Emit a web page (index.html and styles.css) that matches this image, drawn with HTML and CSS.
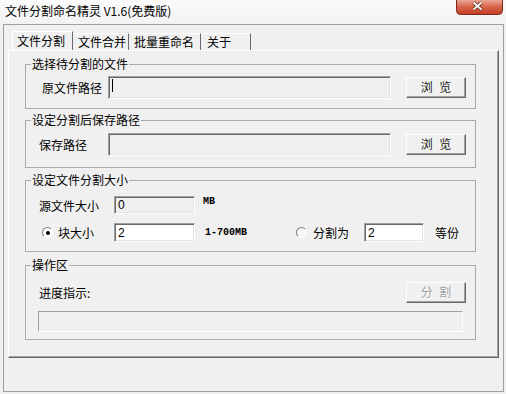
FILE: index.html
```html
<!DOCTYPE html>
<html lang="zh-CN">

<head>
    <meta charset="UTF-8">
    <title>文件分割命名精灵 V1.6(免费版)</title>
    <link rel="stylesheet" href="styles.css">
</head>

<body>

    <div class="titlebar">
        <span class="title">文件分割命名精灵 V1.6(免费版)</span>
        <div class="close">
            <svg width="47" height="15" viewBox="0 0 47 15">
                <defs>
                    <linearGradient id="closeGrad" x1="0" y1="0" x2="0" y2="1">
                        <stop offset="0" stop-color="#e9a897"/>
                        <stop offset="0.45" stop-color="#d8664c"/>
                        <stop offset="1" stop-color="#c23c22"/>
                    </linearGradient>
                </defs>
                <path d="M0.5 0 V10.5 A4 4 0 0 0 4.5 14.5 H42.5 A4 4 0 0 0 46.5 10.5 V0" fill="url(#closeGrad)" stroke="#7b2a1c"/>
                <path d="M17.5 2.5 L25.5 9.5 M25.5 2.5 L17.5 9.5" stroke="#5e2418" stroke-width="3.4"/>
                <path d="M17.5 2.5 L25.5 9.5 M25.5 2.5 L17.5 9.5" stroke="#ffffff" stroke-width="1.8"/>
            </svg>
        </div>
    </div>

    <div class="client">
        <!-- Tabs -->
        <div class="tabs">
            <div class="tab active tab-split">文件分割</div>
            <div class="tab tab-merge">文件合并</div>
            <div class="tab tab-rename">批量重命名</div>
            <div class="tab tab-about">关于</div>
        </div>

        <div class="panel">
            <fieldset class="group g1">
                <legend>选择待分割的文件</legend>
                <div class="row">
                    <span class="label label-src">原文件路径</span>
                    <div class="field path"><span class="caret"></span></div>
                    <div class="btn">浏 览</div>
                </div>
            </fieldset>

            <fieldset class="group g2">
                <legend>设定分割后保存路径</legend>
                <div class="row">
                    <span class="label label-save">保存路径</span>
                    <div class="field path"></div>
                    <div class="btn">浏 览</div>
                </div>
            </fieldset>

            <fieldset class="group g3">
                <legend>设定文件分割大小</legend>
                <div class="row size-row">
                    <span class="label label-size">源文件大小</span>
                    <div class="field size">0</div>
                    <span class="unit unit-top">MB</span>
                </div>
                <div class="row block-row">
                    <span class="radio checked"></span>
                    <span class="label label-block">块大小</span>
                    <div class="field size white">2</div>
                    <span class="unit unit-range">1-700MB</span>
                    <span class="radio radio-parts"></span>
                    <span class="label label-parts">分割为</span>
                    <div class="field parts white">2</div>
                    <span class="suffix">等份</span>
                </div>
            </fieldset>

            <fieldset class="group g4">
                <legend>操作区</legend>
                <div class="row progress-row">
                    <span class="label">进度指示:</span>
                    <div class="btn disabled">分 割</div>
                </div>
                <div class="progress"></div>
            </fieldset>
        </div>
    </div>

</body>

</html>
```

FILE: styles.css
```css
/* Window */
body {
    margin: 0;
    width: 506px;
    height: 394px;
    overflow: hidden;
    background-color: #f0f0f0;
    font-family: "Noto Sans CJK SC", "Microsoft YaHei", sans-serif;
    font-size: 12px;
    color: #000;
}

.titlebar {
    display: flex;
    height: 24px;
    background: linear-gradient(#fbfbfb, #f2f2f2);
}

.title {
    padding-left: 5px;
    line-height: 22px;
}

.close {
    margin-left: auto;
    margin-right: 3px;
    height: 15px;
}

.close svg {
    display: block;
}

.client {
    box-sizing: border-box;
    width: 501px;
    height: 368px;
    margin-left: 3px;
    border: 1px solid #a0a0a0;
    padding: 6px 0 0 4px;
}

/* Tabs */
.tabs {
    display: flex;
    align-items: flex-end;
    height: 19px;
    padding-left: 4px;
}

.tab {
    box-sizing: border-box;
    height: 17px;
    padding-left: 5px;
    line-height: 15px;
    border-top: 1px solid #fff;
    border-right: 1px solid #696969;
    white-space: nowrap;
}

.tab.active {
    height: 19px;
    line-height: 17px;
    border-left: 1px solid #fff;
    padding-left: 4px;
}

.tab-split { width: 61px; }
.tab-merge { width: 56px; }
.tab-rename { width: 72px; }
.tab-about { width: 50px; padding-left: 6px; }

.panel {
    box-sizing: border-box;
    width: 491px;
    height: 308px;
    border: 1px solid;
    border-color: #fff #696969 #696969 #fff;
    box-shadow: inset -1px -1px 0 #a0a0a0;
    padding: 6px 0 0 16px;
}

/* Group boxes */
.group {
    box-sizing: border-box;
    width: 451px;
    min-width: 0;
    margin: 0;
    padding: 0;
    border: 1px solid #a9a9a9;
}

.group legend {
    margin-left: 5px;
    padding: 0 1px;
    line-height: 14px;
}

.row {
    display: flex;
    align-items: center;
}

.g1 .row {
    height: 23px;
    margin: 5px 0 9px;
    padding-left: 16px;
}

.g2 {
    margin-top: 4px;
}

.g2 .row {
    height: 23px;
    margin: 6px 0 11px;
    padding-left: 13px;
}

.g3 {
    margin-top: 5px;
}

.size-row {
    height: 18px;
    margin-top: 9px;
    padding-left: 13px;
}

.block-row {
    height: 19px;
    margin: 9px 0 9px;
    padding-left: 16px;
}

.g4 {
    margin-top: 6px;
}

.progress-row {
    height: 21px;
    margin-top: 10px;
    padding: 0 9px 0 13px;
    justify-content: space-between;
}

.label {
    white-space: nowrap;
}

.label-src { width: 66px; }
.label-save { width: 69px; }
.label-size { width: 75px; }
.label-block { width: 56px; }
.label-parts { width: 51px; }

/* Edit boxes */
.field {
    box-sizing: border-box;
    display: flex;
    align-items: center;
    height: 100%;
    padding-left: 3px;
    border: 1px solid;
    border-color: #a0a0a0 #fff #fff #a0a0a0;
    box-shadow: inset 1px 1px 0 #696969, inset -1px -1px 0 #e3e3e3;
    background-color: #f0f0f0;
    font-family: "Liberation Sans", Arial, sans-serif;
    font-size: 12px;
}

.field.white {
    background-color: #fff;
}

.path { width: 283px; }
.size { width: 81px; }
.parts { width: 60px; }

.caret {
    width: 1px;
    height: 13px;
    margin-top: -5px;
    background-color: #000;
}

.unit {
    font-family: "Liberation Mono", monospace;
    font-weight: bold;
    font-size: 10px;
}

.unit-top {
    align-self: flex-start;
    margin-left: 8px;
    line-height: 12px;
}

.unit-range {
    margin-left: 10px;
    width: 42px;
}

.suffix {
    margin-left: 11px;
}

/* Radio buttons */
.radio {
    box-sizing: border-box;
    display: flex;
    align-items: center;
    justify-content: center;
    width: 11px;
    height: 11px;
    margin-right: 5px;
    border: 1px solid;
    border-color: #808080 #fff #fff #808080;
    border-radius: 50%;
    background-color: #f7f7f7;
}

.radio.checked {
    background-color: #fff;
}

.radio.checked::after {
    content: "";
    width: 4px;
    height: 4px;
    border-radius: 50%;
    background-color: #000;
}

.radio-parts {
    margin-left: 49px;
    margin-right: 6px;
}

/* Buttons */
.btn {
    box-sizing: border-box;
    width: 60px;
    height: 21px;
    margin-left: 15px;
    padding-left: 2px;
    border: 1px solid;
    border-color: #fff #696969 #696969 #fff;
    box-shadow: inset -1px -1px 0 #a0a0a0;
    background-color: #f0f0f0;
    text-align: center;
    line-height: 18px;
    letter-spacing: 2px;
    white-space: pre;
    color: #222;
}

.btn.disabled {
    margin-left: 0;
    color: #a0a0a0;
    text-shadow: 1px 1px 0 #fff;
}

.progress {
    box-sizing: border-box;
    width: 425px;
    height: 21px;
    margin: 8px 0 7px 12px;
    border: 1px solid;
    border-color: #a0a0a0 #fff #fff #a0a0a0;
}
```
